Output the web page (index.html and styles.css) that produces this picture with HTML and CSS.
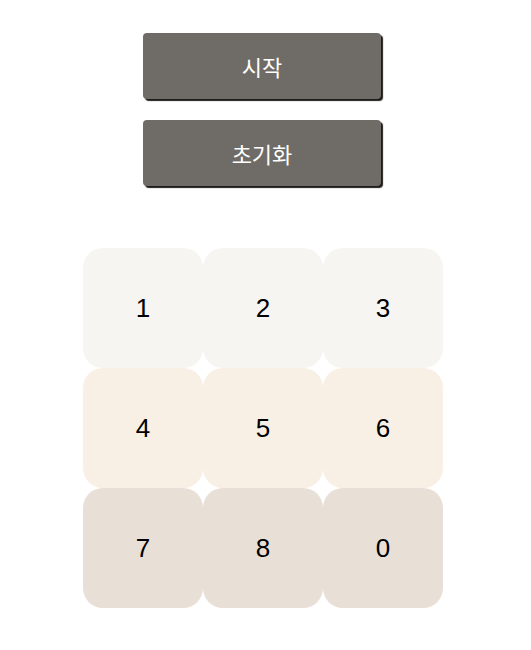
FILE: index.html
```html
<!DOCTYPE html>
<html lang="ko">
<head>
<meta charset="utf-8">
<link rel="stylesheet" href="styles.css">
</head>
<body>
<div class="app">
  <div class="controls">
    <button class="btn">시작</button>
    <button class="btn">초기화</button>
  </div>
  <div class="pad">
    <div class="key r1">1</div>
    <div class="key r1">2</div>
    <div class="key r1">3</div>
    <div class="key r2">4</div>
    <div class="key r2">5</div>
    <div class="key r2">6</div>
    <div class="key r3">7</div>
    <div class="key r3">8</div>
    <div class="key r3">0</div>
  </div>
</div>
</body>
</html>
```
FILE: styles.css
```css
html, body {
  margin: 0;
  padding: 0;
  background: #ffffff;
  font-family: "Liberation Sans", "Noto Sans CJK KR", sans-serif;
}
.app {
  width: 360px;
  margin-left: 83px;
  padding-top: 33px;
}
.controls {
  display: flex;
  flex-direction: column;
  align-items: center;
  gap: 21px;
}
.btn {
  width: 238px;
  height: 66px;
  margin-right: 2px;
  border: none;
  border-radius: 4px;
  background: #6f6b66;
  color: #ffffff;
  font-family: "Liberation Sans", "Noto Sans CJK KR", sans-serif;
  font-size: 22px;
  box-shadow: 2px 2px 1px #1e1c1a;
  padding: 0;
}
.pad {
  margin-top: 62px;
  display: grid;
  grid-template-columns: repeat(3, 120px);
  grid-auto-rows: 120px;
}
.key {
  display: flex;
  align-items: center;
  justify-content: center;
  border-radius: 20px;
  font-size: 26px;
  color: #000000;
}
.r1 { background: #f7f5f2; }
.r2 { background: #f8efe5; }
.r3 { background: #e8dfd6; }
```
